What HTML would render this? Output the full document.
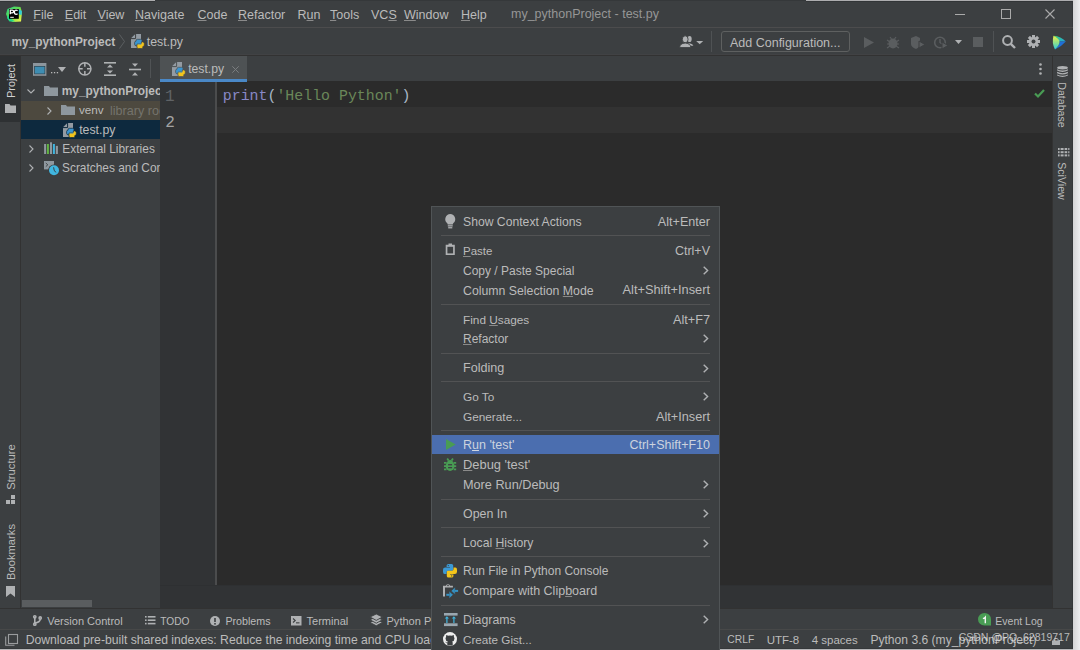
<!DOCTYPE html>
<html><head><meta charset="utf-8">
<style>
*{margin:0;padding:0;box-sizing:border-box}
html,body{width:1080px;height:650px;overflow:hidden;background:#3C3F41;font-family:"Liberation Sans",sans-serif;color:#BBBBBB;font-size:12.5px}
.a{position:absolute}
.t{position:absolute;white-space:nowrap}
svg{position:absolute;overflow:visible}
</style></head><body>
<div class="a" style="left:0px;top:0px;width:1073px;height:650px;background:#3C3F41;"></div>
<div class="a" style="left:0px;top:0px;width:155px;height:1px;background:#adadaf;"></div>
<div class="a" style="left:155px;top:0px;width:651px;height:1px;background:#35383a;"></div>
<div class="a" style="left:806px;top:0px;width:267px;height:1px;background:#adadaf;"></div>
<div class="a" style="left:0px;top:1px;width:155px;height:1px;background:#323537;"></div>
<div class="a" style="left:806px;top:1px;width:267px;height:1px;background:#323537;"></div>
<div class="a" style="left:1072px;top:1px;width:1px;height:648px;background:#35383a;"></div>
<div class="a" style="left:1073px;top:0px;width:7px;height:650px;background:linear-gradient(90deg,#d4d4d6,#ededef);"></div>
<div class="a" style="left:0px;top:649px;width:1073px;height:1px;background:#b6b6b8;"></div>
<div class="a" style="left:0px;top:648px;width:1073px;height:1px;background:#35383a;"></div>
<div class="a" style="left:0px;top:27px;width:1073px;height:1px;background:#4c4c4d;"></div>
<div class="a" style="left:0px;top:54px;width:1073px;height:1px;background:#414244;"></div>
<div class="a" style="left:0px;top:55px;width:1073px;height:1px;background:#323232;"></div>
<div class="a" style="left:0px;top:56px;width:20px;height:66px;background:#2E3133;"></div>
<div class="a" style="left:20px;top:56px;width:1px;height:552px;background:#323232;"></div>
<div class="a" style="left:160px;top:81px;width:892px;height:527px;background:#313335;"></div>
<div class="a" style="left:217px;top:81px;width:835px;height:504px;background:#2B2B2B;"></div>
<div class="a" style="left:215px;top:81px;width:2px;height:504px;background:#4b4c4d;"></div>
<div class="a" style="left:160px;top:585px;width:892px;height:1px;background:#2e3032;"></div>
<div class="a" style="left:217px;top:107px;width:835px;height:26px;background:#323232;"></div>
<div class="a" style="left:1052px;top:56px;width:1px;height:552px;background:#323232;"></div>
<div class="a" style="left:0px;top:608px;width:1073px;height:1px;background:#323232;"></div>
<div class="a" style="left:0px;top:629px;width:1073px;height:1px;background:#474848;"></div>
<svg style="left:6px;top:6px" width="16" height="16" viewBox="0 0 16 16"><defs><linearGradient id="pcg" x1="0" y1="0" x2="1" y2="1"><stop offset="0" stop-color="#21D789"/><stop offset="0.5" stop-color="#6BDB4A"/><stop offset="1" stop-color="#FCF84A"/></linearGradient></defs>
<path d="M1.5 3 L8 0.5 L14.5 1 L16 6.5 L15 15.5 L7 16 L2.5 14 L0 8 Z" fill="url(#pcg)"/>
<path d="M12 3 L16 5 L15.5 9 L12 8 Z" fill="#1fc7f0" opacity="0.85"/>
<path d="M2 9 L1 12 L3.5 15.5 L9 15.5 L4 12 Z" fill="#21D789"/>
<rect x="3" y="3" width="9.8" height="9.8" fill="#000"/>
<path d="M4.3 8.3 V4.2 H6.2 Q7.6 4.2 7.6 5.5 Q7.6 6.8 6.2 6.8 H4.3" fill="none" stroke="#fff" stroke-width="1.3"/>
<path d="M11.6 4.6 Q10.9 4.1 10.1 4.1 Q8.4 4.1 8.4 6.2 Q8.4 8.3 10.1 8.3 Q10.9 8.3 11.6 7.8" fill="none" stroke="#fff" stroke-width="1.3"/>
<rect x="4.2" y="10.8" width="3.6" height="1" fill="#fff"/></svg>
<div class="t" style="left:33.3px;top:5.00px;font-size:12.5px;line-height:20px;color:#BBBBBB;font-weight:normal;"><span style="text-decoration:underline;text-decoration-color:#8a8a8a;text-underline-offset:0.5px">F</span>ile</div>
<div class="t" style="left:64.8px;top:5.00px;font-size:12.5px;line-height:20px;color:#BBBBBB;font-weight:normal;"><span style="text-decoration:underline;text-decoration-color:#8a8a8a;text-underline-offset:0.5px">E</span>dit</div>
<div class="t" style="left:97.5px;top:5.00px;font-size:12.5px;line-height:20px;color:#BBBBBB;font-weight:normal;"><span style="text-decoration:underline;text-decoration-color:#8a8a8a;text-underline-offset:0.5px">V</span>iew</div>
<div class="t" style="left:135px;top:5.00px;font-size:12.5px;line-height:20px;color:#BBBBBB;font-weight:normal;"><span style="text-decoration:underline;text-decoration-color:#8a8a8a;text-underline-offset:0.5px">N</span>avigate</div>
<div class="t" style="left:197.5px;top:5.00px;font-size:12.5px;line-height:20px;color:#BBBBBB;font-weight:normal;"><span style="text-decoration:underline;text-decoration-color:#8a8a8a;text-underline-offset:0.5px">C</span>ode</div>
<div class="t" style="left:238px;top:5.00px;font-size:12.5px;line-height:20px;color:#BBBBBB;font-weight:normal;"><span style="text-decoration:underline;text-decoration-color:#8a8a8a;text-underline-offset:0.5px">R</span>efactor</div>
<div class="t" style="left:297.5px;top:5.00px;font-size:12.5px;line-height:20px;color:#BBBBBB;font-weight:normal;">R<span style="text-decoration:underline;text-decoration-color:#8a8a8a;text-underline-offset:0.5px">u</span>n</div>
<div class="t" style="left:330px;top:5.00px;font-size:12.5px;line-height:20px;color:#BBBBBB;font-weight:normal;"><span style="text-decoration:underline;text-decoration-color:#8a8a8a;text-underline-offset:0.5px">T</span>ools</div>
<div class="t" style="left:371px;top:5.00px;font-size:12.5px;line-height:20px;color:#BBBBBB;font-weight:normal;">VC<span style="text-decoration:underline;text-decoration-color:#8a8a8a;text-underline-offset:0.5px">S</span></div>
<div class="t" style="left:404px;top:5.00px;font-size:12.5px;line-height:20px;color:#BBBBBB;font-weight:normal;"><span style="text-decoration:underline;text-decoration-color:#8a8a8a;text-underline-offset:0.5px">W</span>indow</div>
<div class="t" style="left:461px;top:5.00px;font-size:12.5px;line-height:20px;color:#BBBBBB;font-weight:normal;"><span style="text-decoration:underline;text-decoration-color:#8a8a8a;text-underline-offset:0.5px">H</span>elp</div>
<div class="t" style="left:511px;top:4.00px;font-size:12.5px;line-height:20px;color:#969696;font-weight:normal;">my_pythonProject - test.py</div>
<div class="a" style="left:955px;top:14px;width:10px;height:1px;background:#aaaaaa;"></div>
<div class="a" style="left:1000.5px;top:9px;width:10px;height:10px;background:transparent;border:1px solid #aaaaaa"></div>
<svg style="left:1045px;top:9px" width="10" height="10" viewBox="0 0 10 10"><path d="M0.5 0.5 L9.5 9.5 M9.5 0.5 L0.5 9.5" stroke="#aaaaaa" stroke-width="1.1"/></svg>
<div class="t" style="left:11.5px;top:32.00px;font-size:11.9px;line-height:20px;color:#BBBBBB;font-weight:bold;">my_pythonProject</div>
<svg style="left:119px;top:34px" width="6" height="15" viewBox="0 0 6 15"><path d="M0.5 0.5 L5.5 7.5 L0.5 14.5" fill="none" stroke="#5f6264" stroke-width="0.9"/></svg>
<svg style="left:131px;top:34px" width="14" height="15" viewBox="0 0 14 15"><path d="M4.3 0 H10 V14 H0 V4.3 Z" fill="#939BA3"/>
<path d="M0 4.6 H4.6 V0" fill="none" stroke="#3C3F41" stroke-width="1"/>
<g fill="#3A95D0" stroke="#3C3F41" stroke-width="0.7"><path d="M6.4 5.3 H9.6 Q11.1 5.3 11.1 6.8 V8.9 Q11.1 10.1 9.9 10.1 H7.4 Q6.6 10.1 6.6 10.9 V11.8 H5.2 Q3.6 11.8 3.6 10.2 V8.6 Q3.6 7.1 5.1 7.1 H5.1 V6.6 Q5.1 5.3 6.4 5.3 Z"/></g>
<g fill="#F2C41C" stroke="#3C3F41" stroke-width="0.7"><path d="M10.6 14.5 H7.4 Q5.9 14.5 5.9 13 V10.9 Q5.9 9.7 7.1 9.7 H9.6 Q10.4 9.7 10.4 8.9 V7.9 H11.8 Q13.3 7.9 13.3 9.5 V11.1 Q13.3 12.6 11.8 12.6 H11.9 V13.2 Q11.9 14.5 10.6 14.5 Z"/></g>
<rect x="6.6" y="9.5" width="3.8" height="0.9" fill="#3A95D0"/></svg>
<div class="t" style="left:146.8px;top:32.00px;font-size:12.3px;line-height:20px;color:#BBBBBB;font-weight:normal;">test.py</div>
<svg style="left:679px;top:35px" width="25" height="13" viewBox="0 0 25 13"><g fill="#AFB1B3"><ellipse cx="10.6" cy="4" rx="2.1" ry="3.1"/><path d="M9 8.3 Q13.8 8.4 14.3 10.8 H10 Z"/></g>
<g fill="#AFB1B3" stroke="#3C3F41" stroke-width="0.9"><ellipse cx="6.2" cy="4.3" rx="2.9" ry="3.5"/><path d="M0.6 12.6 Q0.8 8.4 6.2 8 Q11.6 8.4 11.9 12.6 Z"/></g>
<path d="M17.2 5.9 H24.2 L20.7 9.3 Z" fill="#AFB1B3"/></svg>
<div class="a" style="left:711px;top:31px;width:1px;height:21px;background:#4f5254;"></div>
<div class="a" style="left:721px;top:31px;width:129px;height:21px;background:transparent;border:1px solid #5E6060;border-radius:3px"></div>
<div class="t" style="left:730px;top:32.80px;font-size:12.5px;line-height:20px;color:#BBBBBB;font-weight:normal;">Add Configuration...</div>
<svg style="left:864px;top:37px" width="10" height="11" viewBox="0 0 10 11"><path d="M0 0 L10 5.5 L0 11 Z" fill="#5A5D5F"/></svg>
<svg style="left:887px;top:36px" width="12" height="13" viewBox="0 0 12 13"><ellipse cx="6" cy="7.5" rx="4.5" ry="5" fill="#5A5D5F"/><path d="M0 4 L3 6 M12 4 L9 6 M0 8 H2 M12 8 H10 M0 12 L3 10 M12 12 L9 10 M3 1 L4.5 3 M9 1 L7.5 3" stroke="#5A5D5F" stroke-width="1.2"/></svg>
<svg style="left:911px;top:36px" width="14" height="13" viewBox="0 0 14 13"><path d="M0 2 L5 0 L9 2 V8 Q9 11 5 13 Q0 11 0 8 Z" fill="#5A5D5F"/><path d="M8 5 L14 8.5 L8 12 Z" fill="#5A5D5F" stroke="#3C3F41" stroke-width="1"/></svg>
<svg style="left:934px;top:36px" width="14" height="13" viewBox="0 0 14 13"><circle cx="6" cy="6.5" r="5.3" fill="none" stroke="#5A5D5F" stroke-width="1.6"/><path d="M6 3 V6.5 L8 8" stroke="#5A5D5F" stroke-width="1.4" fill="none"/><path d="M8 6 L14 9.5 L8 13 Z" fill="#5A5D5F" stroke="#3C3F41" stroke-width="1"/></svg>
<svg style="left:955px;top:40px" width="7" height="4" viewBox="0 0 7 4"><path d="M0 0 H7 L3.5 4 Z" fill="#AFB1B3"/></svg>
<div class="a" style="left:973px;top:37px;width:10px;height:10px;background:#5A5D5F;"></div>
<div class="a" style="left:993px;top:31px;width:1px;height:21px;background:#4f5254;"></div>
<svg style="left:1002px;top:35px" width="14" height="14" viewBox="0 0 14 14"><circle cx="5.5" cy="5.5" r="4.4" fill="none" stroke="#AFB1B3" stroke-width="2"/><path d="M8.8 8.8 L13 13" stroke="#AFB1B3" stroke-width="2.4"/></svg>
<svg style="left:1027px;top:35px" width="13" height="13" viewBox="0 0 13 13"><g fill="#AFB1B3"><circle cx="6.5" cy="6.5" r="4.6"/>
<rect x="5" y="0" width="3" height="13"/><rect x="0" y="5" width="13" height="3"/>
<rect x="5" y="0" width="3" height="13" transform="rotate(45 6.5 6.5)"/><rect x="5" y="0" width="3" height="13" transform="rotate(-45 6.5 6.5)"/></g><circle cx="6.5" cy="6.5" r="2" fill="#3C3F41"/></svg>
<svg style="left:1052px;top:34.5px" width="14" height="15" viewBox="0 0 14 15"><defs><linearGradient id="tbl" x1="0" y1="0" x2="0" y2="1"><stop offset="0" stop-color="#F0F04A"/><stop offset="0.5" stop-color="#8EE08A"/><stop offset="1" stop-color="#2CCBE0"/></linearGradient>
<linearGradient id="tbt" x1="0" y1="0" x2="1" y2="1"><stop offset="0" stop-color="#3ED873"/><stop offset="1" stop-color="#1E9FE0"/></linearGradient></defs>
<path d="M1.5 0.8 Q9 1.5 13.8 6.5 H7.5 Q6 3 1.5 0.8 Z" fill="url(#tbt)"/>
<path d="M7.5 6.5 H13.8 Q9 12 3 14.5 Q7.8 10 7.5 6.5 Z" fill="#1F6FD6"/>
<path d="M1.5 0.8 Q7.5 4 7.5 6.5 Q7.8 10 3 14.5 Q-0.5 8 1.5 0.8 Z" fill="url(#tbl)"/></svg>
<div class="t" style="left:-49px;top:72.7px;width:120px;height:16px;line-height:16px;text-align:center;font-size:10.9px;color:#D0D0D0;transform:rotate(-90deg)">Project</div>
<svg style="left:5px;top:103.5px" width="11" height="9" viewBox="0 0 11 9"><path d="M0 0 H4.5 L5.5 1.5 H11 V9 H0 Z" fill="#AFB1B3"/></svg>
<div class="t" style="left:-49.3px;top:458.5px;width:120px;height:16px;line-height:16px;text-align:center;font-size:11.2px;color:#BBBBBB;transform:rotate(-90deg)">Structure</div>
<svg style="left:6.2px;top:495px" width="10" height="10" viewBox="0 0 10 10"><rect x="0" y="5" width="4" height="4" fill="#AFB1B3"/><rect x="5" y="5" width="4" height="4" fill="#AFB1B3"/><rect x="5" y="0" width="4" height="4" fill="#AFB1B3"/></svg>
<div class="t" style="left:-49.3px;top:543.5px;width:120px;height:16px;line-height:16px;text-align:center;font-size:11.2px;color:#BBBBBB;transform:rotate(-90deg)">Bookmarks</div>
<svg style="left:6px;top:585.5px" width="9" height="11" viewBox="0 0 9 11"><path d="M0 0 H9 V11 L4.5 7.5 L0 11 Z" fill="#AFB1B3"/></svg>
<svg style="left:32.8px;top:63px" width="13.4" height="12.8" viewBox="0 0 13.4 12.8"><rect x="0" y="0" width="13.4" height="12.8" fill="#8D969D"/><rect x="1.2" y="3" width="11" height="8.2" fill="#2E3B42"/><rect x="1.8" y="3.6" width="9.8" height="7" fill="#3E8DB2"/></svg>
<svg style="left:50.8px;top:71.8px" width="8" height="1.5" viewBox="0 0 8 1.5"><rect x="0" y="0" width="1.3" height="1.3" fill="#B8B8B8"/><rect x="2.9" y="0" width="1.3" height="1.3" fill="#B8B8B8"/><rect x="5.8" y="0" width="1.3" height="1.3" fill="#B8B8B8"/></svg>
<svg style="left:58px;top:67px" width="8" height="5" viewBox="0 0 8 5"><path d="M0 0 H8 L4 5 Z" fill="#AFB1B3"/></svg>
<svg style="left:77.7px;top:61.8px" width="14" height="14" viewBox="0 0 14 14"><circle cx="6.85" cy="6.85" r="6.1" fill="none" stroke="#AFB1B3" stroke-width="1.5"/><path d="M6.85 0.8 V4.7 M6.85 9 V12.9 M0.8 6.85 H4.7 M9 6.85 H12.9" stroke="#AFB1B3" stroke-width="1.5"/></svg>
<svg style="left:104px;top:61.5px" width="12" height="14" viewBox="0 0 12 14"><rect x="0" y="0" width="12" height="1.6" fill="#AFB1B3"/><rect x="0" y="12.4" width="12" height="1.6" fill="#AFB1B3"/><path d="M3 5.5 L6 2.5 L9 5.5 Z M3 8.5 L6 11.5 L9 8.5 Z" fill="#AFB1B3"/></svg>
<svg style="left:128.5px;top:62.5px" width="12" height="13" viewBox="0 0 12 13"><rect x="0" y="5.7" width="12" height="1.6" fill="#AFB1B3"/><path d="M3 0.5 L6 3.8 L9 0.5 Z M3 12.5 L6 9.2 L9 12.5 Z" fill="#AFB1B3"/></svg>
<div class="a" style="left:150px;top:58.5px;width:1px;height:19px;background:#505355;"></div>
<div class="a" style="left:0;top:0;width:160px;height:608px;overflow:hidden"><div class="a" style="left:21px;top:100.5px;width:139px;height:19.5px;background:#4D493F;"></div>
<div class="a" style="left:21px;top:120px;width:139px;height:19px;background:#0D293E;"></div>
<svg style="left:27px;top:88.5px" width="8" height="5" viewBox="0 0 8 5"><path d="M0.5 0.5 L4 4 L7.5 0.5" fill="none" stroke="#AFB1B3" stroke-width="1.1"/></svg>
<svg style="left:44px;top:86px" width="14" height="10" viewBox="0 0 14 10"><path d="M0 0 H5 L6 1.5 H14 V10 H0 Z" fill="#8E979E"/></svg>
<div class="t" style="left:61.8px;top:81.00px;font-size:11.9px;line-height:20px;color:#BBBBBB;font-weight:bold;">my_pythonProject</div>
<svg style="left:46.5px;top:106.5px" width="5" height="8" viewBox="0 0 5 8"><path d="M0.5 0.5 L4 4 L0.5 7.5" fill="none" stroke="#AFB1B3" stroke-width="1.1"/></svg>
<svg style="left:61px;top:105px" width="14" height="10" viewBox="0 0 14 10"><path d="M0 0 H5 L6 1.5 H14 V10 H0 Z" fill="#8E979E"/></svg>
<div class="t" style="left:79px;top:100.00px;font-size:11.7px;line-height:20px;color:#BBBBBB;font-weight:normal;">venv</div>
<div class="t" style="left:110px;top:100.50px;font-size:12.6px;line-height:20px;color:#74736C;font-weight:normal;">library root</div>
<svg style="left:62.8px;top:122.5px" width="14" height="15" viewBox="0 0 14 15"><path d="M4.3 0 H10 V14 H0 V4.3 Z" fill="#939BA3"/>
<path d="M0 4.6 H4.6 V0" fill="none" stroke="#0D293E" stroke-width="1"/>
<g fill="#3A95D0" stroke="#0D293E" stroke-width="0.7"><path d="M6.4 5.3 H9.6 Q11.1 5.3 11.1 6.8 V8.9 Q11.1 10.1 9.9 10.1 H7.4 Q6.6 10.1 6.6 10.9 V11.8 H5.2 Q3.6 11.8 3.6 10.2 V8.6 Q3.6 7.1 5.1 7.1 H5.1 V6.6 Q5.1 5.3 6.4 5.3 Z"/></g>
<g fill="#F2C41C" stroke="#0D293E" stroke-width="0.7"><path d="M10.6 14.5 H7.4 Q5.9 14.5 5.9 13 V10.9 Q5.9 9.7 7.1 9.7 H9.6 Q10.4 9.7 10.4 8.9 V7.9 H11.8 Q13.3 7.9 13.3 9.5 V11.1 Q13.3 12.6 11.8 12.6 H11.9 V13.2 Q11.9 14.5 10.6 14.5 Z"/></g>
<rect x="6.6" y="9.5" width="3.8" height="0.9" fill="#3A95D0"/></svg>
<div class="t" style="left:79.2px;top:120.00px;font-size:12.3px;line-height:20px;color:#BBBBBB;font-weight:normal;">test.py</div>
<svg style="left:29px;top:144.5px" width="5" height="8" viewBox="0 0 5 8"><path d="M0.5 0.5 L4 4 L0.5 7.5" fill="none" stroke="#AFB1B3" stroke-width="1.1"/></svg>
<svg style="left:44px;top:142px" width="14" height="12" viewBox="0 0 14 12"><rect x="0.1" y="2" width="2" height="10" fill="#8F989F"/><rect x="2.9" y="2" width="2" height="10" fill="#62B543"/><rect x="6" y="0.3" width="2" height="11.7" fill="#8F989F"/><rect x="8.9" y="2" width="2" height="10" fill="#40B6E0"/><rect x="11.8" y="3.9" width="2.1" height="8.1" fill="#8F989F"/></svg>
<div class="t" style="left:62.3px;top:139.00px;font-size:11.9px;line-height:20px;color:#BBBBBB;font-weight:normal;">External Libraries</div>
<svg style="left:29px;top:163.5px" width="5" height="8" viewBox="0 0 5 8"><path d="M0.5 0.5 L4 4 L0.5 7.5" fill="none" stroke="#AFB1B3" stroke-width="1.1"/></svg>
<svg style="left:44px;top:161.4px" width="16" height="15" viewBox="0 0 16 15"><rect x="0" y="0" width="10" height="8.4" fill="#8F989F"/><path d="M1.8 2 L3.8 3.8 L1.8 5.6" fill="none" stroke="#3C3F41" stroke-width="0.9"/><circle cx="10" cy="9.3" r="5.9" fill="#3C3F41"/><circle cx="10" cy="9.3" r="5" fill="#40B6E0"/><path d="M9.6 6.3 Q9.6 9.5 11.8 11.4" fill="none" stroke="#3C3F41" stroke-width="1"/></svg>
<div class="t" style="left:62px;top:158.00px;font-size:11.9px;line-height:20px;color:#BBBBBB;font-weight:normal;">Scratches and Consoles</div>
</div><div class="a" style="left:22px;top:599.5px;width:70px;height:7.5px;background:#5A5D5F;border-radius:0"></div>
<div class="a" style="left:160px;top:56px;width:86.6px;height:23px;background:#4E5254;"></div>
<div class="a" style="left:160px;top:79px;width:86.6px;height:3px;background:#4A88C7;"></div>
<svg style="left:171.5px;top:62px" width="14" height="15" viewBox="0 0 14 15"><path d="M4.3 0 H10 V14 H0 V4.3 Z" fill="#939BA3"/>
<path d="M0 4.6 H4.6 V0" fill="none" stroke="#4E5254" stroke-width="1"/>
<g fill="#3A95D0" stroke="#4E5254" stroke-width="0.7"><path d="M6.4 5.3 H9.6 Q11.1 5.3 11.1 6.8 V8.9 Q11.1 10.1 9.9 10.1 H7.4 Q6.6 10.1 6.6 10.9 V11.8 H5.2 Q3.6 11.8 3.6 10.2 V8.6 Q3.6 7.1 5.1 7.1 H5.1 V6.6 Q5.1 5.3 6.4 5.3 Z"/></g>
<g fill="#F2C41C" stroke="#4E5254" stroke-width="0.7"><path d="M10.6 14.5 H7.4 Q5.9 14.5 5.9 13 V10.9 Q5.9 9.7 7.1 9.7 H9.6 Q10.4 9.7 10.4 8.9 V7.9 H11.8 Q13.3 7.9 13.3 9.5 V11.1 Q13.3 12.6 11.8 12.6 H11.9 V13.2 Q11.9 14.5 10.6 14.5 Z"/></g>
<rect x="6.6" y="9.5" width="3.8" height="0.9" fill="#3A95D0"/></svg>
<div class="t" style="left:188.2px;top:59.00px;font-size:12.2px;line-height:20px;color:#BBBBBB;font-weight:normal;">test.py</div>
<svg style="left:232px;top:65.5px" width="7" height="7" viewBox="0 0 7 7"><path d="M0.3 0.3 L6.7 6.7 M6.7 0.3 L0.3 6.7" stroke="#7b7e80" stroke-width="1"/></svg>
<div class="t" style="left:165px;top:86.80px;font-size:16px;line-height:20px;color:#606366;font-weight:normal;font-family:'Liberation Mono',monospace;">1</div>
<div class="t" style="left:165.3px;top:112.80px;font-size:16px;line-height:20px;color:#A4A3A3;font-weight:normal;font-family:'Liberation Mono',monospace;">2</div>
<div class="t" style="left:222.8px;top:86.00px;font-size:14.9px;line-height:20px;color:#BBBBBB;font-weight:normal;font-family:'Liberation Mono',monospace;"><span style="color:#8888C6">print</span><span style="color:#A9B7C6">(</span><span style="color:#6A8759">'Hello Python'</span><span style="color:#A9B7C6">)</span></div>
<svg style="left:1038.5px;top:63px" width="3" height="12" viewBox="0 0 3 12"><circle cx="1.5" cy="1.5" r="1.3" fill="#AFB1B3"/><circle cx="1.5" cy="6" r="1.3" fill="#AFB1B3"/><circle cx="1.5" cy="10.5" r="1.3" fill="#AFB1B3"/></svg>
<svg style="left:1034px;top:89px" width="11" height="9" viewBox="0 0 11 9"><path d="M1 4.5 L4 7.5 L10 1" fill="none" stroke="#499C54" stroke-width="2.2"/></svg>
<svg style="left:1057.3px;top:65.5px" width="11" height="11.5" viewBox="0 0 11 11.5"><g fill="#AFB1B3"><ellipse cx="5.5" cy="1.7" rx="5.4" ry="1.7"/><path d="M0.1 3.2 Q5.5 5.9 10.9 3.2 V4.6 Q5.5 7.3 0.1 4.6 Z"/><path d="M0.1 5.8 Q5.5 8.5 10.9 5.8 V7.2 Q5.5 9.9 0.1 7.2 Z"/><path d="M0.1 8.4 Q5.5 11.1 10.9 8.4 V9.6 Q5.5 12.3 0.1 9.6 Z"/></g></svg>
<div class="t" style="left:1002px;top:97.0px;width:120px;height:16px;line-height:16px;text-align:center;font-size:10.6px;color:#BBBBBB;transform:rotate(90deg)">Database</div>
<svg style="left:1057.5px;top:147.5px" width="11.5" height="8.5" viewBox="0 0 11.5 8.5"><g fill="#AFB1B3"><rect x="0" y="0" width="1.6" height="2"/><rect x="2.6" y="0" width="3" height="2"/><rect x="6.6" y="0" width="2.6" height="2"/><rect x="10.2" y="0" width="1.2" height="2"/><rect x="0" y="3.2" width="1.6" height="2"/><rect x="2.6" y="3.2" width="3" height="2"/><rect x="6.6" y="3.2" width="2.6" height="2"/><rect x="10.2" y="3.2" width="1.2" height="2"/><rect x="0" y="6.4" width="1.6" height="2"/><rect x="2.6" y="6.4" width="3" height="2"/><rect x="6.6" y="6.4" width="2.6" height="2"/><rect x="10.2" y="6.4" width="1.2" height="2"/></g></svg>
<div class="t" style="left:1002px;top:172.5px;width:120px;height:16px;line-height:16px;text-align:center;font-size:10.6px;color:#BBBBBB;transform:rotate(90deg)">SciView</div>
<svg style="left:32.5px;top:614.5px" width="9" height="11" viewBox="0 0 9 11"><g fill="none" stroke="#AFB1B3" stroke-width="1.6"><circle cx="1.8" cy="1.8" r="1.1"/><circle cx="7.2" cy="3" r="1.1"/><circle cx="1.8" cy="9.2" r="1.1"/><path d="M1.8 3 V8 M7.2 4.2 Q7.2 7 1.8 8"/></g></svg>
<div class="t" style="left:47.2px;top:610.80px;font-size:11.05px;line-height:20px;color:#BBBBBB;font-weight:normal;">Version Control</div>
<svg style="left:145px;top:615.5px" width="10.5" height="8.5" viewBox="0 0 10.5 8.5"><g fill="#AFB1B3"><rect x="0" y="0" width="1.6" height="1.6"/><rect x="0" y="3.4" width="1.6" height="1.6"/><rect x="0" y="6.8" width="1.6" height="1.6"/><rect x="2.8" y="0" width="7.7" height="1.6"/><rect x="2.8" y="3.4" width="7.7" height="1.6"/><rect x="2.8" y="6.8" width="7.7" height="1.6"/></g></svg>
<div class="t" style="left:160.2px;top:611.80px;font-size:10.2px;line-height:20px;color:#BBBBBB;font-weight:normal;">TODO</div>
<svg style="left:210px;top:615.5px" width="10" height="10" viewBox="0 0 10 10"><circle cx="5" cy="5" r="5" fill="#AFB1B3"/><rect x="4.2" y="2" width="1.6" height="4" fill="#3C3F41"/><rect x="4.2" y="7" width="1.6" height="1.6" fill="#3C3F41"/></svg>
<div class="t" style="left:225.4px;top:610.80px;font-size:10.7px;line-height:20px;color:#BBBBBB;font-weight:normal;">Problems</div>
<svg style="left:290.5px;top:615.5px" width="10.5" height="9.5" viewBox="0 0 10.5 9.5"><rect x="0" y="0" width="10.5" height="9.5" fill="#AFB1B3"/><path d="M2 2.5 L4.2 4.5 L2 6.5" fill="none" stroke="#3C3F41" stroke-width="1.1"/><rect x="5" y="6.3" width="3.5" height="1.1" fill="#3C3F41"/></svg>
<div class="t" style="left:306.5px;top:610.80px;font-size:11.05px;line-height:20px;color:#BBBBBB;font-weight:normal;">Terminal</div>
<svg style="left:370px;top:613.8px" width="12.5" height="12.2" viewBox="0 0 12.5 12.2"><g fill="#AFB1B3" stroke="#3C3F41" stroke-width="0.9"><path d="M6.25 5.4 L12.5 8.4 L6.25 11.8 L0 8.4 Z"/><path d="M6.25 2.8 L12.5 5.8 L6.25 9.2 L0 5.8 Z"/><path d="M6.25 0 L12.5 3 L6.25 6.4 L0 3 Z"/></g></svg>
<div class="t" style="left:386.5px;top:610.80px;font-size:11.05px;line-height:20px;color:#BBBBBB;font-weight:normal;">Python Packages</div>
<svg style="left:977.8px;top:613.4px" width="13" height="12.6" viewBox="0 0 13 12.6"><path d="M6.5 0 A6.4 6.3 0 0 0 0 6.3 A6.4 6.3 0 0 0 6.5 12.6 H13 V6.3 A6.4 6.3 0 0 0 6.5 0 Z" fill="#499C54"/><path d="M4.9 5.6 Q6.4 5.2 7.3 4.2 V10.3" fill="none" stroke="#F4F4F4" stroke-width="1.4"/></svg>
<div class="t" style="left:995.3px;top:610.80px;font-size:10.5px;line-height:20px;color:#BBBBBB;font-weight:normal;">Event Log</div>
<svg style="left:4.5px;top:633.5px" width="13" height="12" viewBox="0 0 13 12"><g fill="none" stroke="#9a9c9e" stroke-width="1.1"><rect x="3.5" y="0.5" width="9" height="9"/><path d="M0.7 2.5 V11.3 H9.5"/></g></svg>
<div class="t" style="left:25.7px;top:629.90px;font-size:12.2px;line-height:20px;color:#BBBBBB;font-weight:normal;">Download pre-built shared indexes: Reduce the indexing time and CPU load with pre-built Python packages shared indexes</div>
<div class="a" style="left:720px;top:630px;width:352px;height:18px;background:#3C3F41;"></div>
<div class="t" style="left:727.3px;top:630.40px;font-size:10.3px;line-height:20px;color:#BBBBBB;font-weight:normal;">CRLF</div>
<div class="t" style="left:766.7px;top:629.90px;font-size:11.5px;line-height:20px;color:#BBBBBB;font-weight:normal;">UTF-8</div>
<div class="t" style="left:811.7px;top:629.90px;font-size:11.5px;line-height:20px;color:#BBBBBB;font-weight:normal;">4 spaces</div>
<div class="t" style="left:870.4px;top:629.90px;font-size:12.1px;line-height:20px;color:#BBBBBB;font-weight:normal;">Python 3.6 (my_pythonProject)</div>
<svg style="left:1052px;top:637.5px" width="8" height="7" viewBox="0 0 8 7"><rect x="0" y="2.5" width="8" height="4.5" fill="#AFB1B3"/><path d="M1.8 2.8 V1.8 Q1.8 0.4 4 0.4 Q6.2 0.4 6.2 1.8 V2.8" fill="none" stroke="#AFB1B3" stroke-width="1"/></svg>
<div class="t" style="left:958.7px;top:627.20px;font-size:10.5px;line-height:20px;color:rgba(235,235,235,0.72);font-weight:normal;">CSDN @PQ_62819717</div>
<div class="a" style="left:431px;top:206px;width:289px;height:444px;background:#3C3F41;border:1px solid #505456;border-bottom:none"></div>
<div class="a" style="left:432px;top:435px;width:287px;height:19.4px;background:#4B6EAF;"></div>
<div class="t" style="left:463px;top:212.00px;font-size:12.2px;line-height:20px;color:#BBBBBB;font-weight:normal;">Show Context Actions</div>
<div class="t" style="right:370px;top:212.00px;font-size:12.6px;line-height:20px;color:#BBBBBB">Alt+Enter</div>
<div class="a" style="left:441px;top:235px;width:269px;height:1px;background:#525354;"></div>
<div class="t" style="left:463px;top:240.80px;font-size:11.5px;line-height:20px;color:#BBBBBB;font-weight:normal;"><span style="text-decoration:underline;text-decoration-color:#8a8a8a;text-underline-offset:0.5px">P</span>aste</div>
<div class="t" style="right:370px;top:240.80px;font-size:12.5px;line-height:20px;color:#BBBBBB">Ctrl+V</div>
<div class="t" style="left:463px;top:260.50px;font-size:12.0px;line-height:20px;color:#BBBBBB;font-weight:normal;">Copy / Paste Special</div>
<svg style="left:703px;top:265.9px" width="5.5" height="9" viewBox="0 0 5.5 9"><path d="M0.7 0.7 L4.6 4.5 L0.7 8.3" fill="none" stroke="#AFB1B3" stroke-width="1.4"/></svg>
<div class="t" style="left:463px;top:280.90px;font-size:12.3px;line-height:20px;color:#BBBBBB;font-weight:normal;">Column Selection <span style="text-decoration:underline;text-decoration-color:#8a8a8a;text-underline-offset:0.5px">M</span>ode</div>
<div class="t" style="right:370px;top:280.40px;font-size:12.8px;line-height:20px;color:#BBBBBB">Alt+Shift+Insert</div>
<div class="a" style="left:441px;top:304px;width:269px;height:1px;background:#525354;"></div>
<div class="t" style="left:463px;top:309.70px;font-size:11.8px;line-height:20px;color:#BBBBBB;font-weight:normal;">Find <span style="text-decoration:underline;text-decoration-color:#8a8a8a;text-underline-offset:0.5px">U</span>sages</div>
<div class="t" style="right:370px;top:309.70px;font-size:12.7px;line-height:20px;color:#BBBBBB">Alt+F7</div>
<div class="t" style="left:463px;top:328.70px;font-size:12.0px;line-height:20px;color:#BBBBBB;font-weight:normal;"><span style="text-decoration:underline;text-decoration-color:#8a8a8a;text-underline-offset:0.5px">R</span>efactor</div>
<svg style="left:703px;top:334.09999999999997px" width="5.5" height="9" viewBox="0 0 5.5 9"><path d="M0.7 0.7 L4.6 4.5 L0.7 8.3" fill="none" stroke="#AFB1B3" stroke-width="1.4"/></svg>
<div class="a" style="left:441px;top:352.6px;width:269px;height:1px;background:#525354;"></div>
<div class="t" style="left:463px;top:358.10px;font-size:12.6px;line-height:20px;color:#BBBBBB;font-weight:normal;">Folding</div>
<svg style="left:703px;top:363.5px" width="5.5" height="9" viewBox="0 0 5.5 9"><path d="M0.7 0.7 L4.6 4.5 L0.7 8.3" fill="none" stroke="#AFB1B3" stroke-width="1.4"/></svg>
<div class="a" style="left:441px;top:381.3px;width:269px;height:1px;background:#525354;"></div>
<div class="t" style="left:463px;top:386.50px;font-size:11.8px;line-height:20px;color:#BBBBBB;font-weight:normal;">Go To</div>
<svg style="left:703px;top:391.9px" width="5.5" height="9" viewBox="0 0 5.5 9"><path d="M0.7 0.7 L4.6 4.5 L0.7 8.3" fill="none" stroke="#AFB1B3" stroke-width="1.4"/></svg>
<div class="t" style="left:463px;top:406.70px;font-size:11.8px;line-height:20px;color:#BBBBBB;font-weight:normal;">Generate...</div>
<div class="t" style="right:370px;top:406.70px;font-size:12.7px;line-height:20px;color:#BBBBBB">Alt+Insert</div>
<div class="a" style="left:441px;top:430px;width:269px;height:1px;background:#525354;"></div>
<div class="t" style="left:463px;top:435.30px;font-size:12.5px;line-height:20px;color:#CCD3DE;font-weight:normal;">R<span style="text-decoration:underline;text-decoration-color:#D0D6E0;text-underline-offset:0.5px">u</span>n 'test'</div>
<div class="t" style="right:370px;top:435.30px;font-size:12.5px;line-height:20px;color:#CCD3DE">Ctrl+Shift+F10</div>
<div class="t" style="left:463px;top:454.80px;font-size:12.9px;line-height:20px;color:#BBBBBB;font-weight:normal;"><span style="text-decoration:underline;text-decoration-color:#8a8a8a;text-underline-offset:0.5px">D</span>ebug 'test'</div>
<div class="t" style="left:463px;top:474.90px;font-size:12.7px;line-height:20px;color:#BBBBBB;font-weight:normal;">More Run/Debug</div>
<svg style="left:703px;top:480.3px" width="5.5" height="9" viewBox="0 0 5.5 9"><path d="M0.7 0.7 L4.6 4.5 L0.7 8.3" fill="none" stroke="#AFB1B3" stroke-width="1.4"/></svg>
<div class="a" style="left:441px;top:498.8px;width:269px;height:1px;background:#525354;"></div>
<div class="t" style="left:463px;top:504.00px;font-size:12.4px;line-height:20px;color:#BBBBBB;font-weight:normal;">Open In</div>
<svg style="left:703px;top:509.40000000000003px" width="5.5" height="9" viewBox="0 0 5.5 9"><path d="M0.7 0.7 L4.6 4.5 L0.7 8.3" fill="none" stroke="#AFB1B3" stroke-width="1.4"/></svg>
<div class="a" style="left:441px;top:527.2px;width:269px;height:1px;background:#525354;"></div>
<div class="t" style="left:463px;top:533.10px;font-size:12.2px;line-height:20px;color:#BBBBBB;font-weight:normal;">Local <span style="text-decoration:underline;text-decoration-color:#8a8a8a;text-underline-offset:0.5px">H</span>istory</div>
<svg style="left:703px;top:538.5px" width="5.5" height="9" viewBox="0 0 5.5 9"><path d="M0.7 0.7 L4.6 4.5 L0.7 8.3" fill="none" stroke="#AFB1B3" stroke-width="1.4"/></svg>
<div class="a" style="left:441px;top:556.4px;width:269px;height:1px;background:#525354;"></div>
<div class="t" style="left:463px;top:561.40px;font-size:12.0px;line-height:20px;color:#BBBBBB;font-weight:normal;">Run File in Python Console</div>
<div class="t" style="left:463px;top:580.90px;font-size:12.5px;line-height:20px;color:#BBBBBB;font-weight:normal;">Compare with Clip<span style="text-decoration:underline;text-decoration-color:#8a8a8a;text-underline-offset:0.5px">b</span>oard</div>
<div class="a" style="left:441px;top:605px;width:269px;height:1px;background:#525354;"></div>
<div class="t" style="left:463px;top:609.60px;font-size:12.3px;line-height:20px;color:#BBBBBB;font-weight:normal;">Diagrams</div>
<svg style="left:703px;top:615.0px" width="5.5" height="9" viewBox="0 0 5.5 9"><path d="M0.7 0.7 L4.6 4.5 L0.7 8.3" fill="none" stroke="#AFB1B3" stroke-width="1.4"/></svg>
<div class="t" style="left:463px;top:629.80px;font-size:11.7px;line-height:20px;color:#BBBBBB;font-weight:normal;">Create Gist...</div>
<svg style="left:445px;top:213.8px" width="10.5" height="14.5" viewBox="0 0 10.5 14.5"><path d="M5.25 0 A5.1 5.1 0 0 1 8.4 9 Q7.9 9.6 7.8 10.5 H2.7 Q2.6 9.6 2.1 9 A5.1 5.1 0 0 1 5.25 0 Z" fill="#AFB1B3"/><rect x="2.8" y="11.2" width="4.9" height="1.3" fill="#AFB1B3"/><rect x="3.2" y="13.1" width="4.1" height="1.3" fill="#AFB1B3"/></svg>
<svg style="left:445px;top:243px" width="10.5" height="12.5" viewBox="0 0 10.5 12.5"><path d="M3.5 0.5 H7 V1.8 H9.8 V12 H0.7 V1.8 H3.5 Z" fill="#AFB1B3"/><rect x="2.4" y="3.8" width="5.7" height="6.6" fill="#3C3F41"/></svg>
<svg style="left:446px;top:439px" width="10" height="11" viewBox="0 0 10 11"><path d="M0 0 L9.7 5.5 L0 11 Z" fill="#499C54"/></svg>
<svg style="left:444px;top:458.3px" width="12.2" height="13" viewBox="0 0 12.2 13"><g fill="#499C54"><ellipse cx="6.1" cy="7.9" rx="4.4" ry="5.1"/><ellipse cx="6.1" cy="3.6" rx="2.6" ry="1.6"/>
<path d="M3.2 0.5 L4.6 2.6 M9 0.5 L7.6 2.6 M0 4.9 H2.5 M12.2 4.9 H9.7 M0 8.1 H2.2 M12.2 8.1 H10 M0 11.3 H2.5 M12.2 11.3 H9.7" stroke="#499C54" stroke-width="1.8"/></g>
<rect x="4.1" y="6.1" width="4" height="1.3" fill="#3C3F41"/><rect x="4.1" y="9" width="4" height="1.3" fill="#3C3F41"/></svg>
<svg style="left:443.4px;top:563.8px" width="14" height="13.5" viewBox="0 0 14 13.5"><path d="M5.4 0 H8.6 Q10.2 0 10.2 1.6 V5.4 Q10.2 6.8 8.8 6.8 H5 Q3.5 6.8 3.5 8.4 V10 H1.6 Q0 10 0 7.8 V5.8 Q0 3.6 2.2 3.6 H7 V3 H3.6 V1.6 Q3.6 0 5.4 0 Z" fill="#3C99D4"/>
<circle cx="5.3" cy="1.6" r="0.6" fill="#3C3F41"/>
<path d="M8.6 13.5 H5.4 Q3.8 13.5 3.8 11.9 V8.1 Q3.8 6.7 5.2 6.7 H9 Q10.5 6.7 10.5 5.1 V3.5 H12.4 Q14 3.5 14 5.7 V7.7 Q14 9.9 11.8 9.9 H7 V10.5 H10.4 V11.9 Q10.4 13.5 8.6 13.5 Z" fill="#F4C51A"/>
<circle cx="8.7" cy="11.9" r="0.6" fill="#3C3F41"/></svg>
<svg style="left:443px;top:583.8px" width="15.5" height="15" viewBox="0 0 15.5 15"><path d="M0 1.8 H3 Q3 0.2 5 0.2 Q7 0.2 7 1.8 H9.9 V3.6 H2 V12.6 H0 Z" fill="#AFB1B3"/><ellipse cx="5" cy="1.6" rx="1" ry="0.6" fill="#3C3F41"/>
<g fill="#3592C4" stroke="#3C3F41" stroke-width="0.6"><path d="M8.1 6.9 L12.2 3 V10.6 Z"/><path d="M10.3 10.8 L6.1 7 V14.6 Z"/></g>
<g fill="#3592C4"><rect x="11.8" y="5.9" width="3.3" height="2"/><rect x="3.3" y="9.8" width="3.2" height="2"/></g></svg>
<svg style="left:443.6px;top:612.9px" width="13.6" height="13.1" viewBox="0 0 13.6 13.1"><rect x="0" y="0" width="13.6" height="2.6" fill="#9AA7B0"/><rect x="0" y="10.3" width="13.6" height="2.8" fill="#9AA7B0"/>
<path d="M2.9 3.2 L5 5.6 H3.5 V10 H2.3 V5.6 H0.8 Z M9.9 3.2 L12 5.6 H10.5 V10 H9.3 V5.6 H7.8 Z" fill="#40B6E0"/></svg>
<svg style="left:443.2px;top:632px" width="14" height="14.2" viewBox="0 0 14 14.2"><circle cx="7" cy="7.1" r="7" fill="#EDEDED"/>
<path d="M4.3 13.6 V11.2 Q3.4 11.6 2.8 10.6 Q2.4 9.9 1.9 9.8 Q2.6 9.5 3.2 10.2 Q3.6 10.8 4.4 10.5 Q4.4 9.9 4.9 9.6 Q2.6 9.2 2.5 6.6 Q2.5 5.6 3.1 4.9 Q2.9 4 3.3 3.1 Q4.2 3.1 5 3.8 Q7 3.2 9 3.8 Q9.8 3.1 10.7 3.1 Q11.1 4 10.9 4.9 Q11.5 5.6 11.5 6.6 Q11.4 9.2 9.1 9.6 Q9.7 10.1 9.7 11 V13.6 Z" fill="#3C3F41"/></svg>
</body></html>
